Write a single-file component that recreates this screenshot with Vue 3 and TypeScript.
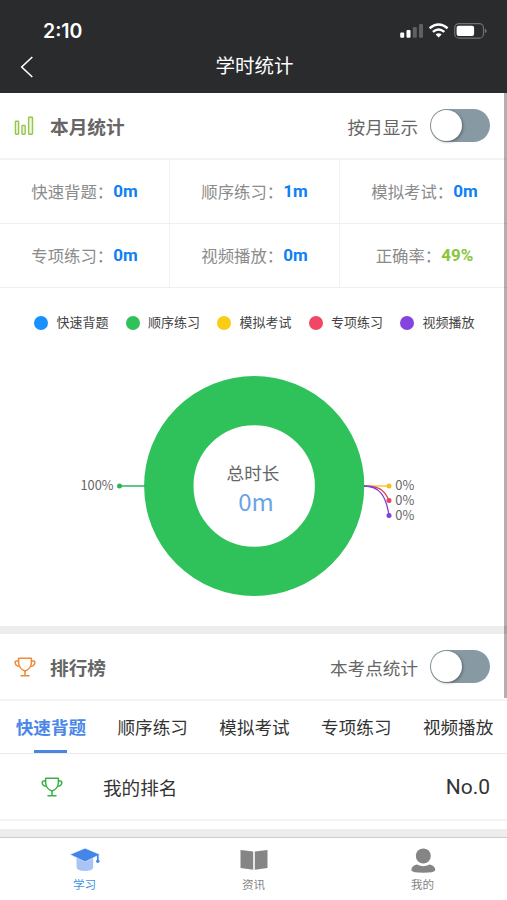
<script setup lang="ts">
import { ref } from 'vue'

interface Stat {
  label: string
  value: string
  accent?: boolean
}
interface Series {
  name: string
  color: string
}
interface Callout {
  color: string
  path: string
  y: number
}

const monthly = ref(false)
const siteOnly = ref(false)
const activeTab = ref(0)

const stats: Stat[] = [
  { label: '快速背题：', value: '0m' },
  { label: '顺序练习：', value: '1m' },
  { label: '模拟考试：', value: '0m' },
  { label: '专项练习：', value: '0m' },
  { label: '视频播放：', value: '0m' },
  { label: '正确率：', value: '49%', accent: true },
]

const series: Series[] = [
  { name: '快速背题', color: '#1890ff' },
  { name: '顺序练习', color: '#2fc25b' },
  { name: '模拟考试', color: '#facc14' },
  { name: '专项练习', color: '#f04864' },
  { name: '视频播放', color: '#8543e0' },
]

const callouts: Callout[] = [
  { color: '#f5bd27', path: 'M364 136H389', y: 136 },
  { color: '#e2455c', path: 'M364 136C378 136 384 139 389 150.5', y: 150.5 },
  { color: '#7d41d3', path: 'M364 136C379 136 386 145 389 165.5', y: 165.5 },
]

const tabs: string[] = ['快速背题', '顺序练习', '模拟考试', '专项练习', '视频播放']
</script>

<template>
  <div class="phone">
    <header class="top">
      <div class="status">
        <span class="time">2:10</span>
        <svg class="signals" width="88" height="18" viewBox="0 0 88 18">
          <g fill="#fff">
            <rect x="1.2" y="10.4" width="4" height="5.4" rx="1" />
            <rect x="7.5" y="8" width="4" height="7.8" rx="1" />
            <rect x="13.8" y="5" width="4" height="10.8" rx="1" opacity=".25" />
            <rect x="20" y="2" width="4" height="13.8" rx="1" opacity=".25" />
          </g>
          <g fill="none" stroke="#fff" stroke-width="2.4">
            <path d="M30.6 6.3Q39.6 -1.1 48.6 6.3" />
            <path d="M33.9 9.8Q39.6 5 45.3 9.8" />
          </g>
          <path d="M36.6 12.4Q39.6 10 42.6 12.4L39.6 15.6Z" fill="#fff" />
          <rect x="55.7" y="1.7" width="28.8" height="14.4" rx="4.2" fill="none" stroke="#707172" stroke-width="1.2" />
          <rect x="57.6" y="3.7" width="17.5" height="10.4" rx="2" fill="#fff" />
          <path d="M85.9 6.8Q87.7 7.2 87.7 8.9T85.9 11Z" fill="#707172" />
        </svg>
      </div>
      <nav class="nav">
        <svg class="back" width="14" height="22" viewBox="0 0 14 22">
          <path d="M12.3 1L1.7 11L12.3 21" fill="none" stroke="#fff" stroke-width="1.6" />
        </svg>
        <h1>学时统计</h1>
      </nav>
    </header>

    <main class="content">
      <section>
        <div class="head">
          <svg class="head-icon" width="22" height="20" viewBox="0 0 22 20">
            <g fill="#eef7d6" stroke="#93c750" stroke-width="1.4">
              <rect x="1.4" y="5.2" width="3.2" height="13" rx=".7" />
              <rect x="8" y="9.5" width="3.2" height="8.7" rx=".7" />
              <rect x="14.6" y="1.3" width="3.9" height="16.9" rx=".7" />
            </g>
          </svg>
          <h2>本月统计</h2>
          <span class="switch-label">按月显示</span>
          <button class="switch" :class="{ on: monthly }" @click="monthly = !monthly"><i /></button>
        </div>

        <div class="grid">
          <div v-for="s in stats" :key="s.label" class="cell">
            <span>{{ s.label }}</span><b :class="{ accent: s.accent }">{{ s.value }}</b>
          </div>
        </div>

        <div class="legend">
          <div v-for="s in series" :key="s.name" class="legend-item">
            <i :style="{ background: s.color }" />{{ s.name }}
          </div>
        </div>

        <svg class="chart" width="507" height="276" viewBox="0 0 507 276">
          <circle cx="254.2" cy="136" r="85.4" fill="none" stroke="#2fc25b" stroke-width="49.4" />
          <path d="M120 136H145" stroke="#2fb45b" stroke-width="1.5" />
          <circle cx="119.5" cy="136" r="2.5" fill="#2fb45b" />
          <text class="pct" x="80.5" y="140.4" textLength="33" lengthAdjust="spacingAndGlyphs">100%</text>
          <g v-for="c in callouts" :key="c.y">
            <path :d="c.path" :stroke="c.color" fill="none" stroke-width="1.3" />
            <circle cx="389" :cy="c.y" r="2.5" :fill="c.color" />
            <text class="pct" x="395.3" :y="c.y + 4.4" textLength="19" lengthAdjust="spacingAndGlyphs">0%</text>
          </g>
          <text class="total" x="253" y="130">总时长</text>
          <text class="amount" x="256" y="161">0m</text>
        </svg>
      </section>

      <div class="divider" />

      <section>
        <div class="head">
          <svg class="head-icon" width="22" height="20" viewBox="0 0 22 20">
            <g fill="none" stroke="#ed8b38" stroke-width="1.5" stroke-linejoin="round" stroke-linecap="round">
              <path d="M4.6 1.2H17.4V6Q16.8 12 11 14Q5.2 12 4.6 6Z" />
              <path d="M4.5 4H2.2Q1 4 1.1 5.5Q1.5 9.3 5.4 9.3M17.5 4H19.8Q21 4 20.9 5.5Q20.5 9.3 16.6 9.3M11 14V18.5M7 18.7H15" />
            </g>
          </svg>
          <h2>排行榜</h2>
          <span class="switch-label">本考点统计</span>
          <button class="switch" :class="{ on: siteOnly }" @click="siteOnly = !siteOnly"><i /></button>
        </div>

        <div class="tabs">
          <div v-for="(t, i) in tabs" :key="t" class="tab" :class="{ active: i === activeTab }" @click="activeTab = i">
            <span>{{ t }}</span>
          </div>
        </div>

        <div class="mine">
          <svg class="mine-icon" width="22" height="20" viewBox="0 0 22 20">
            <g fill="none" stroke="#3cb14a" stroke-width="1.5" stroke-linejoin="round" stroke-linecap="round">
              <path d="M4.6 1.2H17.4V6Q16.8 12 11 14Q5.2 12 4.6 6Z" />
              <path d="M4.5 4H2.2L1.1 5.5Q1.5 9.3 5.4 9.3M17.5 4H19.8L20.9 5.5Q20.5 9.3 16.6 9.3M11 14V18.5M7 18.7H15" />
            </g>
          </svg>
          <span class="mine-name">我的排名</span>
          <span class="mine-rank">No.0</span>
        </div>
      </section>
      <div class="tail" />
      <div class="scrollbar" />
    </main>

    <footer class="tabbar">
      <div class="bar-item current">
        <svg width="32" height="26" viewBox="0 0 32 26">
          <path d="M7.5 11V20Q8 24 16 24T24.2 20V11Z" fill="#a9c3f5" />
          <path d="M16 1.2L31 7.5L16 14.8L1 7.5Z" fill="#4585e8" stroke="#fff" stroke-width=".5" />
          <path d="M28.8 8V15" stroke="#4585e8" stroke-width="1.7" />
          <circle cx="28.8" cy="14.3" r="1.7" fill="#4585e8" />
        </svg>
        <span>学习</span>
      </div>
      <div class="bar-item">
        <svg width="32" height="26" viewBox="0 0 32 26">
          <path d="M2.5 3L15.2 4.6V22.7L2.5 21ZM29.5 3L16.8 4.6V22.7L29.5 21Z" fill="#858585" />
        </svg>
        <span>资讯</span>
      </div>
      <div class="bar-item">
        <svg width="32" height="26" viewBox="0 0 32 26">
          <circle cx="16.3" cy="8.9" r="7.5" fill="#858585" />
          <path d="M4.3 23.2Q4.5 18.6 10 17.5Q16.3 21 22.6 17.5Q28.1 18.6 28.3 23.2Q27.5 25.7 16.3 25.7T4.3 23.2Z" fill="#858585" />
        </svg>
        <span>我的</span>
      </div>
    </footer>
  </div>
</template>

<style>
body {
  margin: 0;
  background: #fff;
}
</style>

<style scoped>
* {
  box-sizing: border-box;
}
.phone {
  display: flex;
  flex-direction: column;
  width: 507px;
  height: 900px;
  overflow: hidden;
  background: #fff;
  color: #333;
  font-family: Roboto, 'Noto Sans CJK SC', sans-serif;
  white-space: nowrap;
}
h1,
h2 {
  margin: 0;
}
.top {
  height: 93px;
  background: #2a2b2d;
  color: #fff;
}
.status {
  display: flex;
  justify-content: space-between;
  align-items: center;
  height: 40px;
  padding: 21px 20px 0 43px;
}
.time {
  font: 600 19.5px/20px Inter, sans-serif;
}
.signals {
  display: block;
}
.nav {
  display: flex;
  align-items: center;
  height: 53px;
  padding: 0 0 0 20px;
}
.back {
  flex: none;
}
h1 {
  flex: 1;
  padding: 1px 32px 0 0;
  text-align: center;
  font-size: 19.5px;
  font-weight: 400;
  line-height: 28px;
}
.content {
  position: relative;
  height: 744px;
}
.head {
  display: flex;
  align-items: center;
  height: 67px;
  padding: 0 17px 0 14px;
  border-bottom: 2px solid #f3f3f3;
}
.head-icon {
  flex: none;
}
.head h2 {
  flex: 1;
  margin-left: 14px;
  padding-top: 4px;
  color: #666;
  font-size: 18.7px;
  font-weight: 700;
  line-height: 28px;
}
.switch-label {
  margin-right: 12px;
  padding-top: 4px;
  color: #666;
  font-size: 17.6px;
  line-height: 28px;
}
.switch {
  display: flex;
  width: 60px;
  height: 33px;
  padding: 1px;
  border: 0;
  border-radius: 17px;
  background: #8799a2;
}
.switch.on {
  justify-content: flex-end;
}
.switch i {
  width: 31px;
  height: 31px;
  border-radius: 50%;
  background: #fff;
  box-shadow: 1px 1px 3px rgba(0, 0, 0, 0.35);
}
.grid {
  display: grid;
  grid-template-columns: 170px 170px 167px;
}
.cell {
  display: flex;
  align-items: center;
  justify-content: center;
  height: 64px;
  padding-bottom: 1px;
  border-right: 1px solid #f2f2f2;
  border-bottom: 1px solid #efefef;
  color: #8b8b8b;
  font-size: 16.4px;
}
.cell:nth-child(3n) {
  padding-left: 2px;
  border-right: 0;
}
.cell b {
  color: #0e80f2;
  font-size: 17px;
}
.cell b.accent {
  color: #89c53b;
}
.legend {
  display: flex;
  gap: 17px;
  height: 62px;
  padding: 7px 0 0 34px;
  align-items: center;
}
.legend-item {
  display: flex;
  flex: none;
  align-items: center;
  width: 74.5px;
  color: #444;
  font-size: 13px;
  line-height: 19px;
}
.legend-item i {
  flex: none;
  width: 14px;
  height: 14px;
  margin-right: 8.5px;
  border-radius: 50%;
}
.chart {
  display: block;
}
.pct {
  fill: #666;
  font: 13.3px 'Noto Sans CJK SC', sans-serif;
}
.total {
  fill: #666;
  font: 17.6px 'Noto Sans CJK SC', sans-serif;
  text-anchor: middle;
}
.amount {
  fill: #6ba3e6;
  font: 24px 'Noto Sans CJK SC', sans-serif;
  text-anchor: middle;
}
.divider {
  height: 8px;
  background: #ededed;
}
.tabs {
  display: flex;
  height: 53px;
  border-bottom: 1px solid #ebebeb;
}
.tab {
  display: flex;
  flex: 0 0 101.8px;
  flex-direction: column;
  align-items: center;
  height: 52px;
  color: #333;
  font-size: 17.6px;
  line-height: 54px;
}
.tab.active {
  color: #4b87e8;
  font-weight: 700;
}
.tab.active::after {
  width: 33px;
  height: 3px;
  margin-top: -5px;
  background: #4b87e0;
  content: '';
}
.mine {
  display: flex;
  align-items: center;
  height: 67px;
  padding: 0 17px 0 41px;
  border-bottom: 2px solid #f3f3f3;
}
.mine-name {
  flex: 1;
  margin-left: 40px;
  font-size: 18.6px;
}
.mine-rank {
  font-size: 21px;
}
.tail {
  height: 8px;
  margin-top: 8px;
  background: #ededed;
}
.scrollbar {
  position: absolute;
  top: 0;
  right: 0;
  width: 3px;
  height: 605px;
  background: rgba(0, 0, 0, 0.31);
}
.tabbar {
  display: flex;
  height: 63px;
  border-top: 1px solid #ccc;
  background: #fff;
}
.bar-item {
  display: flex;
  flex: 1;
  flex-direction: column;
  align-items: center;
  padding-top: 9px;
  color: #858585;
  font-size: 11.6px;
  line-height: 20px;
}
.bar-item svg {
  display: block;
  margin-bottom: 2px;
}
.bar-item.current {
  color: #3d96e2;
}
</style>
